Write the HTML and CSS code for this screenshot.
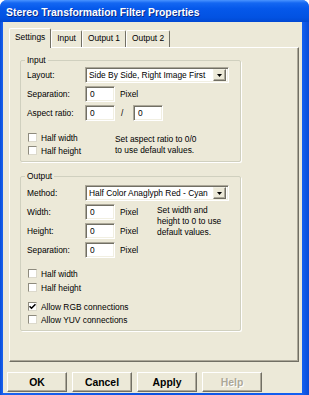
FILE: index.html
```html
<!DOCTYPE html>
<html lang="en">
<head>
    <meta charset="UTF-8">
    <meta name="viewport" content="width=device-width, initial-scale=1.0">
    <title>Stereo Transformation Filter Properties</title>
    <link rel="stylesheet" href="styles.css">
</head>
<body>
    <div class="window">
        <div class="titlebar">
            <span class="title">Stereo Transformation Filter Properties</span>
        </div>
        <div class="client">
            <div class="tabs">
                <div class="tab active">Settings</div>
                <div class="tab">Input</div>
                <div class="tab">Output 1</div>
                <div class="tab">Output 2</div>
            </div>
            <div class="panel">
                <fieldset class="group group-input">
                    <legend>Input</legend>
                    <div class="row row-first">
                        <span class="lbl">Layout:</span>
                        <div class="combo">
                            <span class="combo-text">Side By Side, Right Image First</span>
                            <span class="combo-btn"><svg width="5" height="3" viewBox="0 0 5 3"><path d="M0 0h5L2.5 3z" fill="#000"/></svg></span>
                        </div>
                    </div>
                    <div class="row">
                        <span class="lbl">Separation:</span>
                        <span class="field">0</span>
                        <span class="unit">Pixel</span>
                    </div>
                    <div class="row">
                        <span class="lbl">Aspect ratio:</span>
                        <span class="field">0</span>
                        <span class="slash">/</span>
                        <span class="field">0</span>
                    </div>
                    <div class="opts">
                        <div class="checks">
                            <div class="check"><span class="box"></span>Half width</div>
                            <div class="check"><span class="box"></span>Half height</div>
                        </div>
                        <div class="note note-input">Set aspect ratio to 0/0<br>to use default values.</div>
                    </div>
                </fieldset>

                <fieldset class="group group-output">
                    <legend>Output</legend>
                    <div class="row">
                        <span class="lbl">Method:</span>
                        <div class="combo">
                            <span class="combo-text">Half Color Anaglyph Red - Cyan</span>
                            <span class="combo-btn"><svg width="5" height="3" viewBox="0 0 5 3"><path d="M0 0h5L2.5 3z" fill="#000"/></svg></span>
                        </div>
                    </div>
                    <div class="sizes">
                        <div class="size-rows">
                            <div class="row">
                                <span class="lbl">Width:</span>
                                <span class="field">0</span>
                                <span class="unit">Pixel</span>
                            </div>
                            <div class="row">
                                <span class="lbl">Height:</span>
                                <span class="field">0</span>
                                <span class="unit">Pixel</span>
                            </div>
                            <div class="row">
                                <span class="lbl">Separation:</span>
                                <span class="field">0</span>
                                <span class="unit">Pixel</span>
                            </div>
                        </div>
                        <div class="note note-output">Set width and<br>height to 0 to use<br>default values.</div>
                    </div>
                    <div class="checks checks-output">
                        <div class="check"><span class="box"></span>Half width</div>
                        <div class="check"><span class="box"></span>Half height</div>
                        <div class="check check-gap"><span class="box"><svg width="7" height="7" viewBox="0 0 7 7"><path d="M0.5 3.2l2 2 4-4" fill="none" stroke="#000" stroke-width="1.6"/></svg></span>Allow RGB connections</div>
                        <div class="check"><span class="box"></span>Allow YUV connections</div>
                    </div>
                </fieldset>
            </div>
            <div class="buttons">
                <button class="btn">OK</button>
                <button class="btn">Cancel</button>
                <button class="btn">Apply</button>
                <button class="btn disabled">Help</button>
            </div>
        </div>
    </div>
</body>
</html>
```
FILE: styles.css
```css
body {
    margin: 0;
    background-color: #fff;
    font-family: "Liberation Sans", Arial, sans-serif;
    font-size: 8.4px;
    color: #000;
}

.window {
    width: 309px;
    height: 395px;
    display: flex;
    flex-direction: column;
    background: linear-gradient(to right, #0a4ed8 0, #1a62f0 3px, #0b52e0 50%, #1360f2 302px, #0a4cd6 309px);
    border-radius: 7px 7px 0 0;
    overflow: hidden;
}

.titlebar {
    height: 22px;
    flex: none;
    display: flex;
    align-items: center;
    padding-left: 6px;
    background: linear-gradient(#4a94ff 0, #1467f2 3px, #0558ea 40%, #0252e2 80%, #0148d2 100%);
}

.title {
    color: #fff;
    font-weight: bold;
    font-size: 10.4px;
    text-shadow: 1px 1px #0a2a8a;
    position: relative;
    top: 1px;
}

.client {
    flex: 1;
    margin: 0 7px 2px 3px;
    background-color: #ece9d8;
    padding: 6px 3px 1px 6px;
    display: flex;
    flex-direction: column;
}

/* Tabs */
.tabs {
    display: flex;
    align-items: flex-end;
    height: 19px;
    flex: none;
    position: relative;
    z-index: 1;
}

.tab {
    box-sizing: border-box;
    height: 17px;
    line-height: 15px;
    padding: 0 5px;
    border: 1px solid;
    border-color: #fff #716f64 transparent #fff;
    border-bottom: none;
    border-radius: 2px 2px 0 0;
    background-color: #ece9d8;
}

.tab.active {
    height: 20px;
    margin-bottom: -1px;
    line-height: 16px;
}

.panel {
    flex: 1;
    border: 1px solid;
    border-color: #fff #716f64 #716f64 #fff;
    box-shadow: inset -1px -1px #aca899;
    padding: 6px 0 0 10px;
}

/* Group boxes */
.group {
    width: 221px;
    box-sizing: border-box;
    margin: 0;
    padding: 1px 6px 4px;
    border: 1px solid #d0d0bf;
    border-radius: 2px;
    box-shadow: 1px 1px 0 #fff;
}

.group legend {
    padding: 0 2px;
    margin-left: -2px;
    line-height: 12px;
}

.group-output {
    margin-top: 8px;
    padding-top: 3px;
}

.row {
    display: flex;
    align-items: center;
    height: 16px;
}

.row + .row {
    margin-top: 3px;
}

.row-first {
    margin-bottom: 1px;
}

.lbl {
    width: 58px;
    flex: none;
}

.field {
    width: 30px;
    height: 16px;
    flex: none;
    box-sizing: border-box;
    background-color: #fff;
    border: 1px solid;
    border-color: #aca899 #fff #fff #aca899;
    box-shadow: inset 1px 1px #716f64, inset -1px -1px #f1efe2;
    padding-left: 4px;
    line-height: 14px;
}

.unit {
    margin-left: 5px;
}

.slash {
    width: 18px;
    box-sizing: border-box;
    padding-left: 6px;
}

.combo {
    width: 144px;
    height: 16px;
    box-sizing: border-box;
    display: flex;
    align-items: center;
    background-color: #fff;
    border: 1px solid;
    border-color: #aca899 #fff #fff #aca899;
    box-shadow: inset 1px 1px #716f64, inset -1px -1px #f1efe2;
    padding: 1px 2px 1px 1px;
}

.combo-text {
    flex: 1;
    padding-left: 2px;
    white-space: nowrap;
    overflow: hidden;
}

.combo-btn {
    width: 13px;
    height: 12px;
    flex: none;
    box-sizing: border-box;
    display: flex;
    align-items: center;
    justify-content: center;
    background-color: #ece9d8;
    border: 1px solid;
    border-color: #f1efe2 #716f64 #716f64 #f1efe2;
    box-shadow: inset -1px -1px #aca899;
}

/* Checkboxes */
.opts {
    display: flex;
    margin-top: 10px;
}

.checks {
    width: 88px;
    flex: none;
}

.check {
    display: flex;
    align-items: center;
    height: 13px;
    white-space: nowrap;
}

.box {
    width: 9px;
    height: 9px;
    flex: none;
    box-sizing: border-box;
    margin: 0 4px 0 1px;
    background-color: #fff;
    border: 1px solid;
    border-color: #8e8b7e #dcd9cc #dcd9cc #8e8b7e;
    display: flex;
    align-items: center;
    justify-content: center;
}

.note {
    line-height: 11px;
    white-space: nowrap;
}

.note-input {
    padding-top: 3px;
}

.sizes {
    display: flex;
    margin-top: 3px;
}

.size-rows {
    width: 130px;
    flex: none;
}

.note-output {
    padding-top: 1px;
}

.checks-output {
    width: auto;
    margin-top: 9px;
}

.checks-output .check + .check {
    margin-top: 1px;
}

.checks-output .check + .check-gap {
    margin-top: 6px;
}

.checks-output .check-gap + .check {
    margin-top: 0;
}

/* Buttons */
.buttons {
    display: flex;
    gap: 5px;
    margin: 10px 0 0 -2px;
    flex: none;
}

.btn {
    width: 60px;
    height: 20px;
    box-sizing: border-box;
    padding: 0;
    font-family: "Liberation Sans", Arial, sans-serif;
    font-weight: bold;
    font-size: 10.4px;
    color: #000;
    background-color: #ece9d8;
    border: 1px solid;
    border-color: #fff #716f64 #716f64 #fff;
    box-shadow: inset -1px -1px #aca899;
}

.btn.disabled {
    color: #aca899;
    text-shadow: 1px 1px #fff;
}
```
